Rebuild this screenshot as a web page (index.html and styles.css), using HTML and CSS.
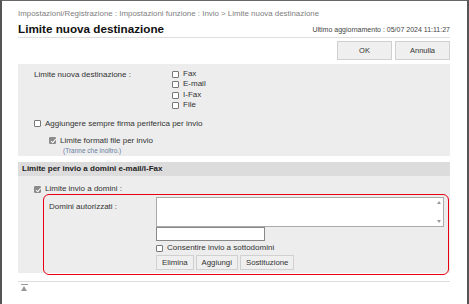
FILE: index.html
```html
<!DOCTYPE html>
<html lang="it">
<head>
  <meta charset="UTF-8" />
  <title>Limite nuova destinazione</title>
  <link rel="stylesheet" href="styles.css">
</head>
<body>
  <div class="page">
    <div class="crumbs">Impostazioni/Registrazione : Impostazioni funzione : Invio &gt; Limite nuova destinazione</div>

    <div class="title-row">
      <h1>Limite nuova destinazione</h1>
      <span class="updated">Ultimo aggiornamento : 05/07 2024 11:11:27</span>
    </div>

    <div class="actions">
      <button class="btn btn-main">OK</button>
      <button class="btn btn-main">Annulla</button>
    </div>

    <!-- general limits -->
    <section class="panel panel-top">
      <div class="dest-row">
        <span class="dest-label">Limite nuova destinazione :</span>
        <div class="dest-list">
          <label class="check"><input type="checkbox" /> Fax</label>
          <label class="check"><input type="checkbox" /> E-mail</label>
          <label class="check"><input type="checkbox" /> I-Fax</label>
          <label class="check"><input type="checkbox" /> File</label>
        </div>
      </div>
      <label class="check sign"><input type="checkbox" /> Aggiungere sempre firma periferica per invio</label>
      <label class="check formats"><input type="checkbox" checked disabled /> Limite formati file per invio</label>
      <div class="note">(Tranne che inoltro.)</div>
    </section>

    <!-- domains -->
    <section class="panel panel-domains">
      <div class="panel-head">Limite per invio a domini e-mail/I-Fax</div>
      <div class="panel-body">
        <label class="check"><input type="checkbox" checked disabled /> Limite invio a domini :</label>
        <div class="domain-box">
          <span class="domain-label">Domini autorizzati :</span>
          <div class="domain-fields">
            <div class="list-box">
              <span class="arrow arrow-up"></span>
              <span class="arrow arrow-down"></span>
            </div>
            <input class="text-input" type="text" />
            <label class="check sub"><input type="checkbox" /> Consentire invio a sottodomini</label>
            <div class="domain-btns">
              <button class="btn btn-small">Elimina</button>
              <button class="btn btn-small">Aggiungi</button>
              <button class="btn btn-small">Sostituzione</button>
            </div>
          </div>
        </div>
      </div>
    </section>

    <div class="footer">
      <span class="to-top"></span>
    </div>
  </div>
</body>
</html>
```

FILE: styles.css
```css
* {
  box-sizing: border-box;
}
html, body {
  margin: 0;
  height: 100%;
}
body {
  font-family: 'Segoe UI', 'Liberation Sans', Arial, sans-serif;
  font-size: 8px;
  color: #333;
  background: #fff;
  border-top: 1px solid #666;
  border-left: 2px solid #555;
  border-right: 2px solid #555;
  overflow: hidden;
}

.page {
  padding: 6px 17px 0 16px;
}

.crumbs {
  color: #808080;
  font-size: 7.9px;
  line-height: 14px;
  height: 14px;
}

.title-row {
  display: flex;
  justify-content: space-between;
  align-items: flex-end;
  height: 17px;
  padding-bottom: 1px;
  border-bottom: 1px solid #dedede;
}
h1 {
  margin: 0;
  font-size: 11.7px;
  font-weight: bold;
  color: #111;
  line-height: 15px;
}
.updated {
  color: #444;
  font-size: 7px;
  line-height: 12px;
}

.actions {
  display: flex;
  justify-content: flex-end;
  gap: 3px;
  margin-top: 3px;
}
.btn {
  font-family: inherit;
  color: #333;
  background: #efefef;
  border: 1px solid #d0d0d0;
  padding: 0;
  cursor: pointer;
}
.btn-main {
  width: 55px;
  height: 19px;
  font-size: 7.5px;
}

.panel {
  background: #ededed;
}
.panel-top {
  margin-top: 4px;
  height: 92px;
  padding: 5px 16px 0;
}

.check {
  display: flex;
  align-items: center;
  gap: 4px;
  line-height: 10px;
  white-space: nowrap;
}
.check input {
  appearance: none;
  -webkit-appearance: none;
  margin: 0;
  width: 7px;
  height: 7px;
  border: 1px solid #777;
  border-radius: 1px;
  background: #fff;
  flex: none;
  position: relative;
}
.check input:checked {
  background: #8a8a8a;
  border-color: #8a8a8a;
}
.check input:checked::after {
  content: "";
  position: absolute;
  left: 1.5px;
  top: 0;
  width: 2px;
  height: 3.5px;
  border: solid #fff;
  border-width: 0 1px 1px 0;
  transform: rotate(40deg);
}

.dest-row {
  display: flex;
}
.dest-label {
  width: 138px;
  line-height: 10px;
  padding-top: 1px;
}
.dest-list .check {
  line-height: 10.4px;
}

.sign {
  margin-top: 8px;
}
.formats {
  margin-top: 7px;
  padding-left: 15px;
}
.note {
  padding-left: 29px;
  font-size: 6.5px;
  color: #6b7ea0;
  line-height: 9px;
}

.panel-domains {
  margin-top: 6px;
}
.panel-head {
  background: #dcdcdc;
  font-weight: bold;
  line-height: 14px;
  padding-left: 4px;
  color: #222;
}
.panel-body {
  padding: 8px 1px 0 16px;
  height: 97px;
}

.domain-box {
  display: flex;
  margin: 0 0 0 9px;
  height: 81px;
  border: 1.5px solid #e60012;
  border-radius: 6px;
  padding: 2px 4px 0 5px;
}
.domain-label {
  width: 107px;
  padding-top: 5px;
  line-height: 10px;
}
.domain-fields {
  flex: 1;
}
.list-box {
  position: relative;
  height: 30px;
  background: #fff;
  border: 1px solid #aaa;
}
.arrow {
  position: absolute;
  right: 2px;
  width: 0;
  height: 0;
  border-left: 2.5px solid transparent;
  border-right: 2.5px solid transparent;
}
.arrow-up {
  top: 3px;
  border-bottom: 3px solid #999;
}
.arrow-down {
  bottom: 3px;
  border-top: 3px solid #999;
}
.text-input {
  display: block;
  width: 109px;
  height: 14px;
  margin: 0;
  border: 1px solid #888;
  background: #fff;
  padding: 0;
}
.sub {
  margin-top: 2px;
}
.domain-btns {
  display: flex;
  gap: 2px;
  margin-top: 2px;
}
.btn-small {
  height: 15px;
  padding: 0 5px;
  font-size: 7.8px;
}

.footer {
  margin-top: 8px;
  border-top: 1px solid #dedede;
  padding: 2px 0 0 3px;
}
.to-top {
  display: block;
  width: 7px;
  height: 8px;
  border-top: 1px solid #999;
  position: relative;
}
.to-top::after {
  content: "";
  position: absolute;
  left: 0;
  top: 1px;
  border-left: 3.5px solid transparent;
  border-right: 3.5px solid transparent;
  border-bottom: 5px solid #999;
}
```
